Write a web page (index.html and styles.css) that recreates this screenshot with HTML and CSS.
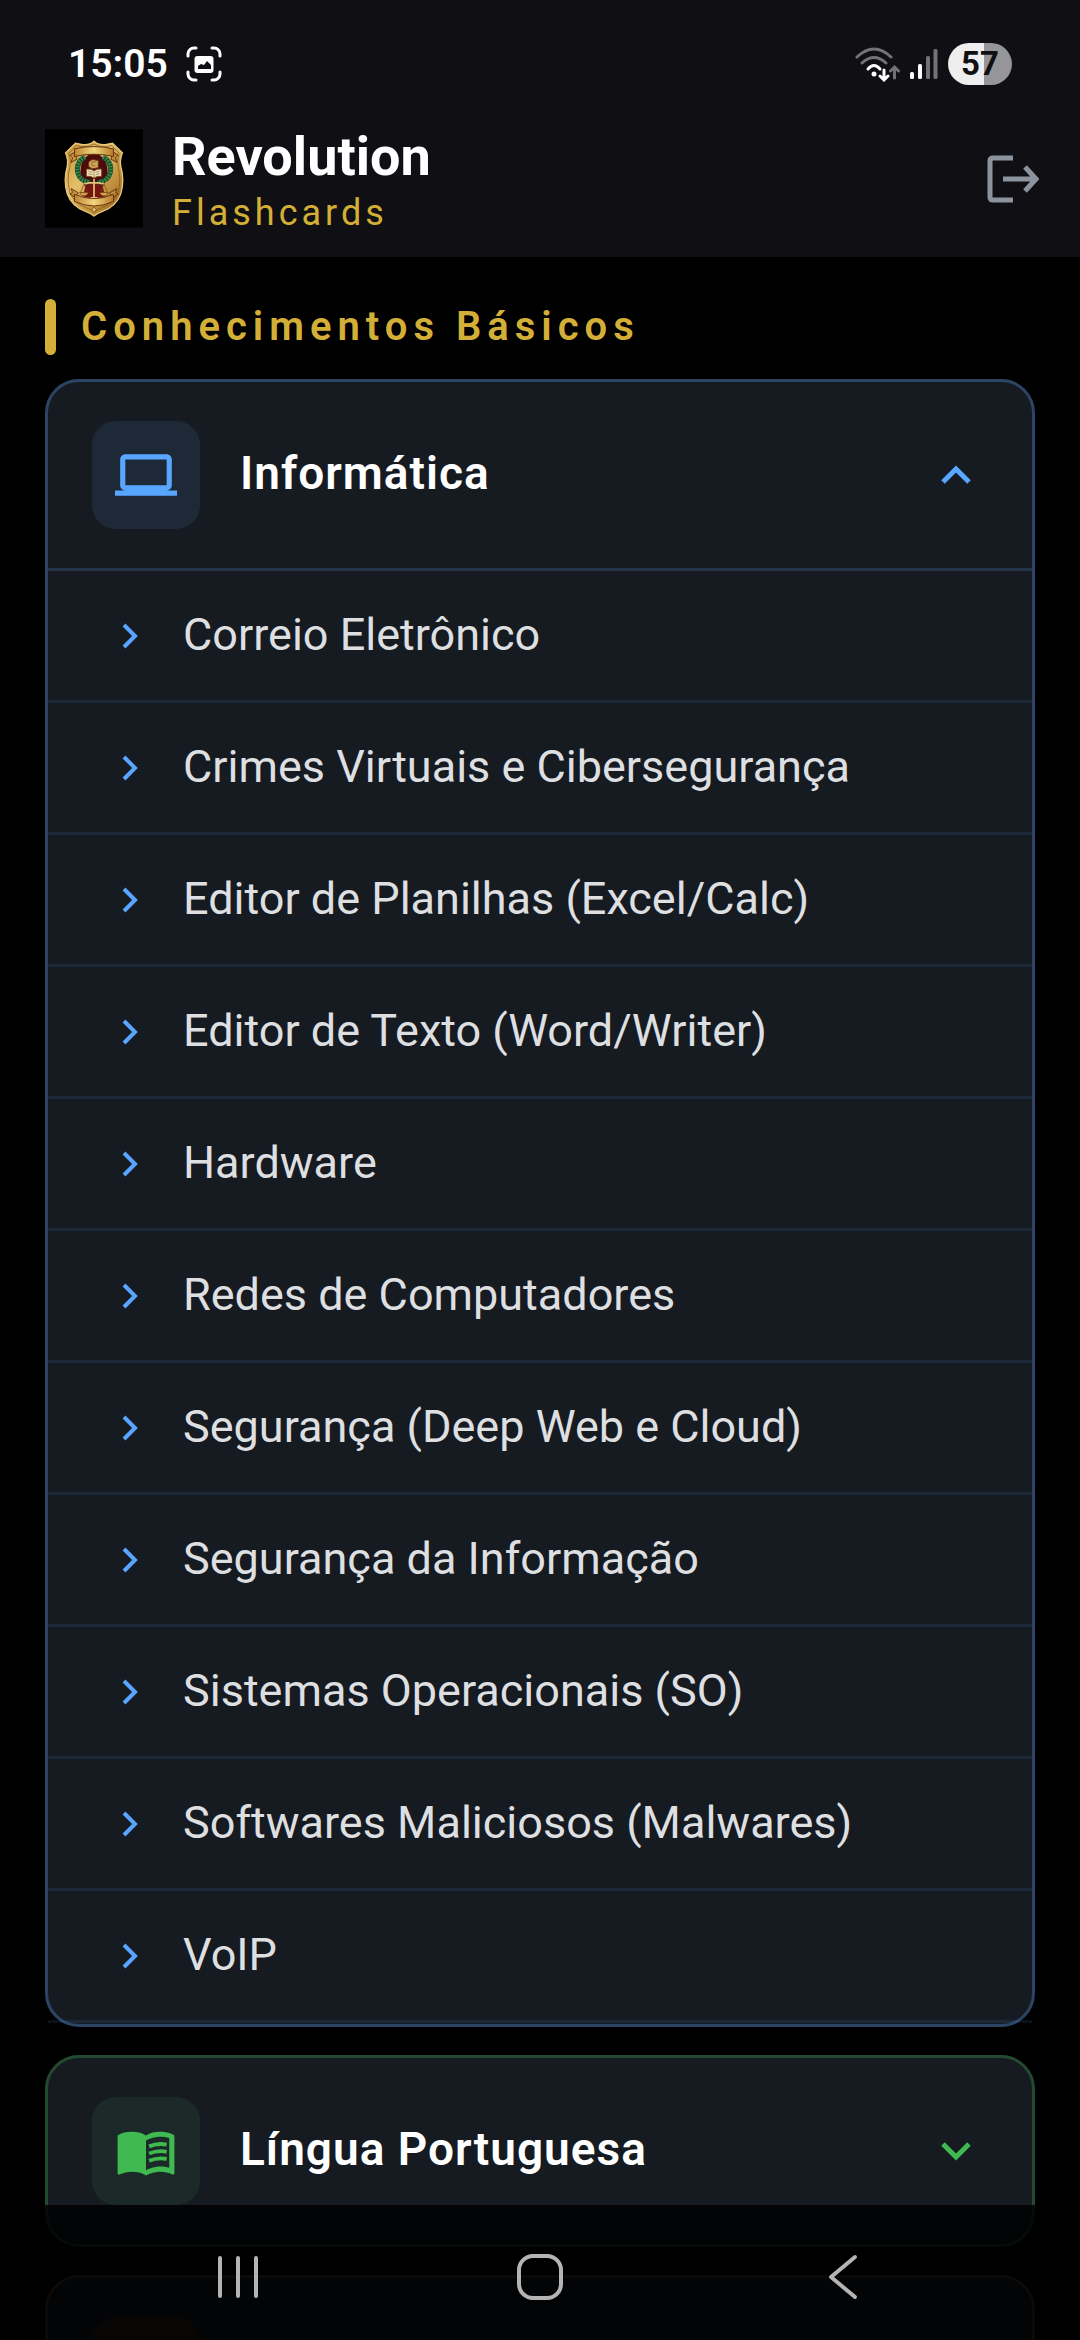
FILE: index.html
```
<!DOCTYPE html>
<html lang="pt-BR">
<head>
    <meta charset="UTF-8">
    <meta name="viewport" content="width=device-width, initial-scale=1.0">
    <title>Revolution Flashcards</title>
    <link rel="stylesheet" href="styles.css">
</head>
<body>
    <div class="top">
        <div class="status-bar">
            <span class="time">15:05</span>
            <svg class="capture-icon" width="36" height="36" viewBox="0 0 36 36">
                <path d="M2 10V8a6 6 0 0 1 6-6h2M26 2h2a6 6 0 0 1 6 6v2M34 26v2a6 6 0 0 1-6 6h-2M10 34H8a6 6 0 0 1-6-6v-2" fill="none" stroke="#fff" stroke-width="3" stroke-linecap="round"/>
                <rect x="8.500" y="10" width="19" height="17" rx="3" fill="#fff"/>
                <path d="M12 23v-3l3-2 3 1 3-4 4 4v4z" fill="#101014"/>
            </svg>
            <div class="status-icons">
                <svg width="45" height="36" viewBox="0 0 45 36">
                    <g fill="none" stroke-width="3" stroke-linecap="round">
                        <path d="M2 11Q19 -5 36 11" stroke="#737376"/>
                        <path d="M7 17Q19 6 31 17" stroke="#737376"/>
                        <path d="M13 23Q19 16 25 23" stroke="#fff"/>
                        <path d="M39.500 32V22M35.500 25l4-4 4 4" stroke="#737376"/>
                        <path d="M29 24v10M25 30l4 4 4-4" stroke="#fff"/>
                    </g>
                    <circle cx="19" cy="28" r="2.500" fill="#fff"/>
                </svg>
                <svg width="28" height="32" viewBox="0 0 28 32">
                    <rect x="0" y="24" width="4" height="7" rx="1.500" fill="#fff"/>
                    <rect x="8" y="16" width="4" height="15" rx="1.500" fill="#fff"/>
                    <rect x="16" y="8" width="4" height="23" rx="1.500" fill="#737376"/>
                    <rect x="23.500" y="1" width="4" height="30" rx="1.500" fill="#737376"/>
                </svg>
                <span class="battery">57</span>
            </div>
        </div>

        <header class="app-header">
            <svg class="logo" width="98" height="99" viewBox="15 27 296 297">
                <defs>
                    <linearGradient id="gold" x1="0" y1="0" x2="1" y2="1">
                        <stop offset="0" stop-color="#c9953a"/>
                        <stop offset="0.400" stop-color="#e3c069"/>
                        <stop offset="0.700" stop-color="#c08f3b"/>
                        <stop offset="1" stop-color="#8a5a1c"/>
                    </linearGradient>
                    <linearGradient id="ribbon" x1="0" y1="0" x2="1" y2="0">
                        <stop offset="0" stop-color="#bd8532"/>
                        <stop offset="0.500" stop-color="#f3d67f"/>
                        <stop offset="1" stop-color="#b67b29"/>
                    </linearGradient>
                </defs>
                <rect x="15" y="27" width="296" height="297" fill="#000"/>
                <path d="M163 63q-13 12-34 10l-22-4-30 29q9 20 5 42-12 40 0 82 14 38 55 53 17 6 26 14 9-8 26-14 41-15 55-53 12-42 0-82-4-22 5-42l-30-29-22 4q-21 2-34-10z" fill="url(#gold)" stroke="#e8c878" stroke-width="4"/>
                <path d="M163 71q-15 10-38 8l-16-3-22 24q8 20 3 42-10 36 0 75 13 34 50 47 16 6 23 12 7-6 23-12 37-13 50-47 10-39 0-75-5-22 3-42l-22-24-16 3q-23 2-38-8z" fill="none" stroke="#80501b" stroke-width="2"/>
                <ellipse cx="163" cy="155" rx="41" ry="55" fill="#4b0c0b"/>
                <path d="M138 192h50l8 38q-33 10-66 0z" fill="#741511"/>
                <path d="M136 110q-29 16-22 48 7 27 38 29M190 110q29 16 22 48-7 27-38 29" fill="none" stroke="#174b2b" stroke-width="15"/>
                <path d="M136 110q-29 16-22 48 7 27 38 29M190 110q29 16 22 48-7 27-38 29" fill="none" stroke="#3b8549" stroke-width="13" stroke-dasharray="5 4"/>
                <path d="M147 126l10-8 19 3v22l-18 3-11-6z" fill="#d4a85b" stroke="#6a3515" stroke-width="3"/>
                <path d="M157 125l13 1M157 125v12h10" fill="none" stroke="#71451c" stroke-width="2"/>
                <path d="M140 147q13-2 23 5 10-7 23-5v22q-13-2-23 5-10-7-23-5z" fill="#f2e0b8" stroke="#784b24" stroke-width="3"/>
                <path d="M163 152v22M146 154l12 3M146 161l12 3M168 157l12-3M168 164l12-3" stroke="#8e6a3f" stroke-width="2"/>
                <path d="M163 176v58M133 192q30-8 60 0M152 234h22" fill="none" stroke="#e7c37a" stroke-width="5"/>
                <path d="M133 192l-11 26h22zM193 192l-11 26h22z" fill="none" stroke="#71451c" stroke-width="2"/>
                <path d="M120 218h26q-3 10-13 10t-13-10zM180 218h26q-3 10-13 10t-13-10z" fill="#dda94a" stroke="#693412" stroke-width="2"/>
                <g fill="url(#ribbon)" stroke="#673413" stroke-width="3">
                    <path d="M104 96l-14 9 8 8-4 14 18-10zM222 96l14 9-8 8 4 14-18-10z"/>
                    <path d="M104 86q59-14 118 0v23q-59-14-118 0z"/>
                    <path d="M104 232l-14-10 8-4-4-12 22 13zM222 232l14-10-8-4 4-12-22 13z"/>
                    <path d="M104 223q59 27 118 0v22q-59 27-118 0z"/>
                </g>
                <path d="M163 262l-7 8 7 8 7-8z" fill="#e8c574" stroke="#673413" stroke-width="2"/>
            </svg>
            <div class="brand">
                <h1>Revolution</h1>
                <p>Flashcards</p>
            </div>
            <button class="logout" type="button" aria-label="Sair">
                <svg width="52" height="48" viewBox="0 0 52 48" fill="none" stroke="#8b949e" stroke-width="5">
                    <path d="M26 3H6Q3 3 3 6v36q0 3 3 3h20M16 24h33M38 12l11 12-11 12"/>
                </svg>
            </button>
        </header>
    </div>

    <main>
        <h2 class="section-title">Conhecimentos Básicos</h2>

        <section class="card blue">
            <button class="card-header" type="button" aria-expanded="true">
                <span class="icon-box">
                    <svg width="62" height="62" viewBox="0 0 24 24" fill="currentColor">
                        <path d="M20 18c1.100 0 1.990-.900 1.990-2L22 6c0-1.100-.900-2-2-2H4c-1.100 0-2 .900-2 2v10c0 1.100.900 2 2 2H0v2h24v-2h-4zM4 6h16v10H4V6z"/>
                    </svg>
                </span>
                <span class="card-title">Informática</span>
                <svg class="toggle" width="32" height="20" viewBox="0 0 32 20"><path d="M3 17L16 4l13 13"/></svg>
            </button>
            <ul class="topics">
                <li><a href="#"><svg width="16" height="26" viewBox="0 0 16 26"><path d="M2 2l11 11L2 24"/></svg><span>Correio Eletrônico</span></a></li>
                <li><a href="#"><svg width="16" height="26" viewBox="0 0 16 26"><path d="M2 2l11 11L2 24"/></svg><span>Crimes Virtuais e Cibersegurança</span></a></li>
                <li><a href="#"><svg width="16" height="26" viewBox="0 0 16 26"><path d="M2 2l11 11L2 24"/></svg><span>Editor de Planilhas (Excel/Calc)</span></a></li>
                <li><a href="#"><svg width="16" height="26" viewBox="0 0 16 26"><path d="M2 2l11 11L2 24"/></svg><span>Editor de Texto (Word/Writer)</span></a></li>
                <li><a href="#"><svg width="16" height="26" viewBox="0 0 16 26"><path d="M2 2l11 11L2 24"/></svg><span>Hardware</span></a></li>
                <li><a href="#"><svg width="16" height="26" viewBox="0 0 16 26"><path d="M2 2l11 11L2 24"/></svg><span>Redes de Computadores</span></a></li>
                <li><a href="#"><svg width="16" height="26" viewBox="0 0 16 26"><path d="M2 2l11 11L2 24"/></svg><span>Segurança (Deep Web e Cloud)</span></a></li>
                <li><a href="#"><svg width="16" height="26" viewBox="0 0 16 26"><path d="M2 2l11 11L2 24"/></svg><span>Segurança da Informação</span></a></li>
                <li><a href="#"><svg width="16" height="26" viewBox="0 0 16 26"><path d="M2 2l11 11L2 24"/></svg><span>Sistemas Operacionais (SO)</span></a></li>
                <li><a href="#"><svg width="16" height="26" viewBox="0 0 16 26"><path d="M2 2l11 11L2 24"/></svg><span>Softwares Maliciosos (Malwares)</span></a></li>
                <li><a href="#"><svg width="16" height="26" viewBox="0 0 16 26"><path d="M2 2l11 11L2 24"/></svg><span>VoIP</span></a></li>
            </ul>
        </section>

        <section class="card green">
            <button class="card-header" type="button" aria-expanded="false">
                <span class="icon-box">
                    <svg width="62" height="62" viewBox="0 0 24 24" fill="currentColor">
                        <path d="M21 5c-1.110-.350-2.330-.500-3.500-.500-1.950 0-4.050.400-5.500 1.500-1.450-1.100-3.550-1.500-5.500-1.500S2.450 4.900 1 6v14.650c0 .250.250.500.500.500.100 0 .150-.050.250-.050C3.100 20.450 5.050 20 6.500 20c1.950 0 4.050.400 5.500 1.500 1.350-.850 3.800-1.500 5.500-1.500 1.650 0 3.350.300 4.750 1.050.100.050.150.050.250.050.250 0 .500-.250.500-.500V6c-.600-.450-1.250-.750-2-1zm0 13.500c-1.100-.350-2.300-.500-3.500-.500-1.700 0-4.150.650-5.500 1.500V8c1.350-.850 3.800-1.500 5.500-1.500 1.200 0 2.400.150 3.500.500v11.500z"/>
                        <path d="M13.200 10.200q3.400-1.400 6.800-.700M13.200 13q3.400-1.400 6.800-.700M13.200 15.800q3.400-1.400 6.800-.700" fill="none" stroke="currentColor" stroke-width="1.500"/>
                    </svg>
                </span>
                <span class="card-title">Língua Portuguesa</span>
                <svg class="toggle" width="32" height="20" viewBox="0 0 32 20"><path d="M3 3l13 13L29 3"/></svg>
            </button>
        </section>

        <section class="card orange">
            <button class="card-header" type="button" aria-expanded="false" aria-label="Abrir matéria">
                <span class="icon-box"></span>
            </button>
        </section>
    </main>

    <nav class="nav-bar">
        <button type="button" aria-label="Recentes">
            <svg width="46" height="46" viewBox="0 0 46 46"><path d="M5 4v38M23 4v38M41 4v38"/></svg>
        </button>
        <button type="button" aria-label="Início">
            <svg width="46" height="46" viewBox="0 0 46 46"><rect x="2" y="2" width="42" height="42" rx="14"/></svg>
        </button>
        <button type="button" aria-label="Voltar">
            <svg width="46" height="46" viewBox="0 0 46 46"><path d="M36 3L12 23l24 20"/></svg>
        </button>
    </nav>
</body>
</html>
```
FILE: styles.css
```
* {
    box-sizing: border-box;
    margin: 0;
    padding: 0;
}

body {
    display: flex;
    flex-direction: column;
    height: 100vh;
    background: #000;
    color: #fff;
    font-family: Roboto, sans-serif;
}

button {
    background: none;
    border: none;
    color: inherit;
    font-family: inherit;
    cursor: pointer;
}

svg {
    display: block;
    flex-shrink: 0;
}

.top {
    flex-shrink: 0;
    background: #101014;
}

.status-bar {
    display: flex;
    align-items: center;
    height: 100px;
    padding: 28px 68px 0;
}

.time {
    font-size: 39px;
    font-weight: 600;
}

.capture-icon {
    margin-left: 18px;
}

.status-icons {
    display: flex;
    align-items: center;
    gap: 10px;
    margin-left: auto;
}

.battery {
    width: 64px;
    border-radius: 21px;
    background: linear-gradient(90deg, #eee 56%, #969698 56%);
    color: #101014;
    font-size: 33px;
    font-weight: 700;
    line-height: 42px;
    text-align: center;
}

.app-header {
    display: flex;
    align-items: center;
    height: 157px;
    padding: 0 41px 0 45px;
}

.brand {
    flex: 1;
    margin-left: 29px;
    padding-top: 4px;
}

.brand h1 {
    font-size: 54px;
    font-weight: 700;
    line-height: 64px;
}

.brand p {
    color: #d4af37;
    font-size: 36px;
    letter-spacing: 4px;
    line-height: 48px;
}

main {
    flex: 1;
    min-height: 0;
    padding: 42px 45px 0;
    overflow: hidden;
}

.section-title {
    display: flex;
    align-items: center;
    gap: 25px;
    margin-bottom: 24px;
    color: #d4af37;
    font-size: 40px;
    font-weight: 600;
    letter-spacing: 6px;
    line-height: 56px;
}

.section-title::before {
    content: "";
    width: 11px;
    height: 56px;
    border-radius: 6px;
    background: #d4af37;
}

.card {
    margin-bottom: 28px;
    border: 3px solid var(--line);
    border-radius: 34px;
    background: #161b22;
}

.blue {
    --accent: #58a6ff;
    --tint: #1e2938;
    --line: #2c4565;
}

.green {
    --accent: #3fb950;
    --tint: #1b2a28;
    --line: #234a31;
}

.orange {
    --accent: #f0883e;
    --tint: #37291f;
    --line: #59402b;
}

.card-header {
    display: flex;
    align-items: center;
    width: 100%;
    height: 186px;
    padding: 0 60px 0 44px;
}

.icon-box {
    display: flex;
    align-items: center;
    justify-content: center;
    width: 108px;
    height: 108px;
    border-radius: 24px;
    background: var(--tint);
    color: var(--accent);
}

.card-title {
    flex: 1;
    margin-left: 40px;
    padding-bottom: 4px;
    font-size: 46px;
    font-weight: 600;
    letter-spacing: 1px;
    text-align: left;
}

.toggle,
.topics svg {
    fill: none;
    stroke: var(--accent);
    stroke-width: 5px;
}

.topics {
    padding-bottom: 1px;
    border-top: 3px solid #243549;
    list-style: none;
}

.topics a {
    display: flex;
    align-items: center;
    gap: 45px;
    height: 132px;
    padding-left: 74px;
    border-bottom: 3px solid rgba(88, 166, 255, 0.1);
    color: #dedfe0;
    font-size: 45px;
    text-decoration: none;
}

.topics svg {
    stroke-width: 4px;
}

.topics span {
    padding-bottom: 2px;
}

.nav-bar {
    position: fixed;
    right: 0;
    bottom: 0;
    left: 0;
    display: flex;
    height: 135px;
    padding: 8px 8% 0;
    background: rgba(0, 0, 0, 0.85);
}

.nav-bar button {
    display: flex;
    flex: 1;
    align-items: center;
    justify-content: center;
}

.nav-bar svg {
    fill: none;
    stroke: #b4b4b4;
    stroke-width: 4px;
    stroke-linecap: round;
    stroke-linejoin: round;
}
```
